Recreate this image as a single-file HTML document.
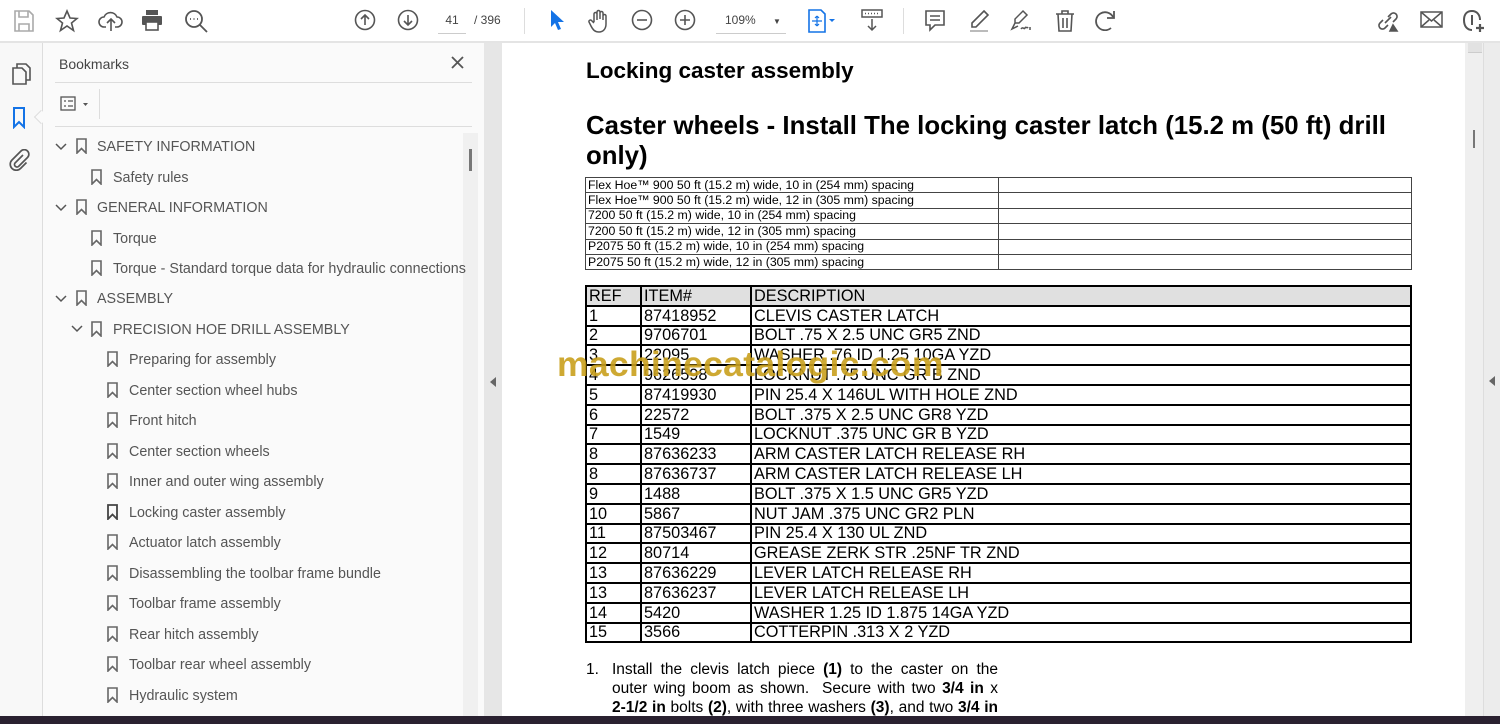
<!DOCTYPE html>
<html><head><meta charset="utf-8"><style>
*{margin:0;padding:0;box-sizing:border-box}
body{width:1500px;height:724px;overflow:hidden;position:relative;background:#fff;font-family:"Liberation Sans",Arial,sans-serif}
.abs{position:absolute}
#tb{left:0;top:0;width:1500px;height:43px;background:#fff;border-bottom:2px solid #e4e4e4}
.ic{position:absolute;top:9px}
#rail{left:0;top:43px;width:43px;height:673px;background:#f8f8f8;border-right:1px solid #ddd}
#panel{left:43px;top:43px;width:441px;height:673px;background:#fafafa}
#gstrip{left:484px;top:43px;width:18px;height:673px;background:#e6e6e6}
#page{left:502px;top:43px;width:963px;height:673px;background:#fff}
#rscroll{left:1465px;top:43px;width:18px;height:673px;background:#efefef}
#rpanel{left:1483px;top:43px;width:17px;height:673px;background:#ececec;border-left:1px solid #ddd}
#bottom{left:0;top:716px;width:1500px;height:8px;background:#2a2130}
.bm{position:absolute;color:#555;white-space:nowrap;font-family:"Liberation Sans",sans-serif;font-size:14.3px;margin-top:1px}
.bmi{position:absolute;width:11px;height:16px}
.chev{position:absolute;width:12px;height:8px}
table{border-collapse:collapse;position:absolute}
#t1{left:585px;top:177px;width:827px;font-size:12.3px}
#t1 td{border:1px solid #444;height:15.4px;line-height:13px;padding:0 2px;white-space:nowrap}
#t2{left:585px;top:285px;width:827px;font-size:16.3px}
#t2 td{border:2px solid #000;height:19.8px;line-height:16px;padding:0 2px;white-space:nowrap}
.para{position:absolute;left:110px;width:386px;font-size:15.5px;line-height:19px;color:#000;text-align:justify;text-align-last:justify;white-space:nowrap}
</style></head><body>
<div id="tb" class="abs">
<svg class="ic" style="left:13px" width="22" height="24" viewBox="0 0 22 24" fill="none" stroke="#aaa" stroke-width="1.6"><path d="M2 2h14l4 4v16H2z"/><path d="M6 2v6h9V2M6 22v-7h10v7"/></svg>
<svg class="ic" style="left:55px" width="24" height="24" viewBox="0 0 24 24" fill="none" stroke="#555" stroke-width="1.6"><path d="M12 2l3 7 7 .5-5.5 4.5 2 7.5L12 17l-6.5 4.5 2-7.5L2 9.5 9 9z"/></svg>
<svg class="ic" style="left:98px" width="26" height="24" viewBox="0 0 26 24" fill="none" stroke="#555" stroke-width="1.6"><path d="M8 18H6a5 5 0 010-10 7 7 0 0113 0 5 5 0 010 10h-2"/><path d="M13 22V11M9 14l4-4 4 4"/></svg>
<svg class="ic" style="left:141px" width="22" height="22" viewBox="0 0 22 22" fill="#555"><rect x="5" y="1" width="12" height="5"/><rect x="1" y="7" width="20" height="9" rx="1"/><rect x="5" y="13" width="12" height="8" fill="#fff" stroke="#555" stroke-width="1.6"/></svg>
<svg class="ic" style="left:184px" width="26" height="26" viewBox="0 0 26 26" fill="none" stroke="#555" stroke-width="1.8"><circle cx="10" cy="10" r="8"/><path d="M16 16l7 7"/><path d="M6 10h1M9.5 10h1M13 10h1"/></svg>
<svg class="ic" style="left:354px" width="22" height="22" viewBox="0 0 22 22" fill="none" stroke="#555" stroke-width="1.6"><circle cx="11" cy="11" r="9.5"/><path d="M11 16V6M7 10l4-4 4 4"/></svg>
<svg class="ic" style="left:397px" width="22" height="22" viewBox="0 0 22 22" fill="none" stroke="#555" stroke-width="1.6"><circle cx="11" cy="11" r="9.5"/><path d="M11 6v10M7 12l4 4 4-4"/></svg>
<div class="abs" style="left:438px;top:13px;width:28px;font-size:12px;color:#444;text-align:center;border-bottom:1px solid #ccc;padding-bottom:6px">41</div>
<div class="abs" style="left:474px;top:13px;font-size:12px;color:#444">/ 396</div>
<div class="abs" style="left:524px;top:8px;width:1px;height:26px;background:#ddd"></div>
<svg class="ic" style="left:549px" width="16" height="22" viewBox="0 0 16 22"><path d="M2 1v17l4-4 3 7 3-1-3-7h6z" fill="#1473e6"/></svg>
<svg class="ic" style="left:588px" width="22" height="24" viewBox="0 0 22 24" fill="none" stroke="#555" stroke-width="1.5"><path d="M6 13V5a1.5 1.5 0 013 0v6M9 10V3a1.5 1.5 0 013 0v7M12 10V4a1.5 1.5 0 013 0v7M15 11V7a1.5 1.5 0 013 0v8c0 5-3 8-7 8s-6-2-8-6l-2-4a1.5 1.5 0 012.5-1.5L6 14"/></svg>
<svg class="ic" style="left:631px" width="22" height="22" viewBox="0 0 22 22" fill="none" stroke="#555" stroke-width="1.6"><circle cx="11" cy="11" r="9.5"/><path d="M6 11h10"/></svg>
<svg class="ic" style="left:674px" width="22" height="22" viewBox="0 0 22 22" fill="none" stroke="#555" stroke-width="1.6"><circle cx="11" cy="11" r="9.5"/><path d="M6 11h10M11 6v10"/></svg>
<div class="abs" style="left:716px;top:13px;width:70px;font-size:12px;color:#444;border-bottom:1px solid #ccc;padding:0 0 6px 9px">109% <span style="margin-left:14px;font-size:8px">▼</span></div>
<svg class="ic" style="left:807px" width="30" height="24" viewBox="0 0 30 24"><path d="M2 1h12l4 4v18H2z" fill="#fff" stroke="#1473e6" stroke-width="1.6"/><path d="M10 7v10M5 12h10M10 7l-2 2M10 7l2 2M10 17l-2-2M10 17l2-2" stroke="#1473e6" stroke-width="1.2" fill="none"/><path d="M22 10l3 3 3-3z" fill="#1473e6"/></svg>
<svg class="ic" style="left:860px" width="24" height="24" viewBox="0 0 24 24" fill="none" stroke="#555" stroke-width="1.5"><rect x="2" y="1" width="20" height="7"/><path d="M5 4.5h1M8 4.5h1M11 4.5h1M14 4.5h1M17 4.5h1M12 10v11M8 17l4 4 4-4"/></svg>
<div class="abs" style="left:903px;top:8px;width:1px;height:26px;background:#ddd"></div>
<svg class="ic" style="left:924px" width="22" height="24" viewBox="0 0 22 24" fill="none" stroke="#555" stroke-width="1.6"><path d="M2 2h18v14H11l-5 5v-5H2z"/><path d="M6 7h10M6 11h10"/></svg>
<svg class="ic" style="left:967px" width="24" height="24" viewBox="0 0 24 24" fill="none" stroke="#555" stroke-width="1.6"><path d="M17 2l4 4L9 18H5v-4z"/><path d="M3 22h18" stroke="#bbb" stroke-width="2"/></svg>
<svg class="ic" style="left:1009px" width="26" height="24" viewBox="0 0 26 24" fill="none" stroke="#555" stroke-width="1.5"><path d="M14 2l4 4-8 8H6v-4zM6 14l-3 6 6-3"/><path d="M12 20c2-3 3 1 4-1s2 1 3-1M21 18v3" /></svg>
<svg class="ic" style="left:1055px" width="20" height="24" viewBox="0 0 20 24" fill="none" stroke="#555" stroke-width="1.6"><path d="M1 5h18M7 5V2h6v3M3 5l1 17h12l1-17M8 9v10M12 9v10"/></svg>
<svg class="ic" style="left:1095px" width="22" height="22" viewBox="0 0 22 22" fill="none" stroke="#555" stroke-width="1.8"><path d="M16 19A9 9 0 1118 8"/><path d="M19 2v7h-7"/></svg>
<svg class="ic" style="left:1375px" width="26" height="24" viewBox="0 0 26 24" fill="none" stroke="#555" stroke-width="1.6"><path d="M10 14l6-6M8 11l-3 3a3.5 3.5 0 005 5l3-3M18 13l3-3a3.5 3.5 0 00-5-5l-3 3"/><path d="M15 22l3-6 4 6z" fill="#555"/></svg>
<svg class="ic" style="left:1420px" width="24" height="22" viewBox="0 0 24 22" fill="none" stroke="#555" stroke-width="1.5"><rect x="1" y="3" width="21" height="15"/><path d="M1 3l10.5 9L22 3M1 18l8-7M22 18l-8-7"/></svg>
<svg class="ic" style="left:1462px" width="24" height="26" viewBox="0 0 24 26" fill="none" stroke="#555" stroke-width="2"><path d="M10 21c-5 0-8-4-8-10S5 2 10 2s8 4 8 9"/><path d="M10 6v10"/><path d="M18 15v8M14 19h8" stroke-width="2.2"/></svg>
</div>

<div id="rail" class="abs">
<svg class="abs" style="left:11px;top:19px" width="20" height="24" viewBox="0 0 20 24" fill="none" stroke="#555" stroke-width="1.6"><path d="M6 6V2h9l4 4v12h-4"/><path d="M2 6h9l4 4v12H2z"/></svg>
<svg class="abs" style="left:12px;top:64px" width="14" height="22" viewBox="0 0 14 22" fill="none" stroke="#1473e6" stroke-width="2"><path d="M2 1h10v19l-5-5-5 5z"/></svg>
<div class="abs" style="left:36px;top:69px;width:10px;height:10px;background:#fafafa;border-left:1px solid #ddd;border-bottom:1px solid #ddd;transform:rotate(45deg)"></div>
<svg class="abs" style="left:9px;top:106px" width="22" height="22" viewBox="0 0 22 22" fill="none" stroke="#555" stroke-width="1.7"><path d="M14 6l-8 8a2.5 2.5 0 003.5 3.5l9-9a4.5 4.5 0 00-6.5-6.5l-9 9a6 6 0 008.5 8.5l6-6"/></svg>
</div>

<div id="panel" class="abs">
<div class="abs" style="left:16px;top:13px;font-size:14px;color:#444">Bookmarks</div>
<svg class="abs" style="left:408px;top:13px" width="13" height="13" viewBox="0 0 13 13" stroke="#555" stroke-width="1.8"><path d="M1 1l11 11M12 1L1 12"/></svg>
<div class="abs" style="left:12px;top:39px;width:417px;height:1px;background:#ddd"></div>
<svg class="abs" style="left:17px;top:53px" width="34" height="16" viewBox="0 0 34 16" fill="none" stroke="#555" stroke-width="1.3"><rect x="1" y="1" width="14" height="13"/><path d="M4 5h2M8 5h5M4 10h2M8 10h5"/><path d="M23 7h5l-2.5 3z" fill="#555" stroke="none"/></svg>
<div class="abs" style="left:56px;top:46px;width:1px;height:30px;background:#ddd"></div>
<div class="abs" style="left:12px;top:83px;width:417px;height:1px;background:#ddd"></div>
<div class="abs" style="left:420px;top:90px;width:15px;height:583px;background:#f0f0f0"></div>
<div class="abs" style="left:426px;top:106px;width:3px;height:22px;background:#777"></div>
</div>
<div id="gstrip" class="abs"><div class="abs" style="left:6px;top:334px;width:0;height:0;border-top:5px solid transparent;border-bottom:5px solid transparent;border-right:6px solid #666"></div></div>

<div id="page" class="abs">
<div class="abs" style="left:84px;top:15px;font-size:22.5px;font-weight:bold;color:#000">Locking caster assembly</div>
<div class="abs" style="left:84px;top:68px;width:840px;font-size:25.8px;font-weight:bold;line-height:30px;color:#000">Caster wheels - Install The locking caster latch (15.2 m (50 ft) drill only)</div>
<div class="abs" style="left:84px;top:617px;font-size:15.5px;line-height:19px">1.</div>
<div class="para" style="top:617px">Install the clevis latch piece <b>(1)</b> to the caster on the</div>
<div class="para" style="top:636px">outer wing boom as shown.&nbsp; Secure with two <b>3/4 in</b> x</div>
<div class="para" style="top:655px"><b>2-1/2 in</b> bolts <b>(2)</b>, with three washers <b>(3)</b>, and two <b>3/4 in</b></div>
</div>

<table id="t1">
<tr><td style="width:413px">Flex Hoe™ 900 50 ft (15.2 m) wide, 10 in (254 mm) spacing</td><td></td></tr>
<tr><td>Flex Hoe™ 900 50 ft (15.2 m) wide, 12 in (305 mm) spacing</td><td></td></tr>
<tr><td>7200 50 ft (15.2 m) wide, 10 in (254 mm) spacing</td><td></td></tr>
<tr><td>7200 50 ft (15.2 m) wide, 12 in (305 mm) spacing</td><td></td></tr>
<tr><td>P2075 50 ft (15.2 m) wide, 10 in (254 mm) spacing</td><td></td></tr>
<tr><td>P2075 50 ft (15.2 m) wide, 12 in (305 mm) spacing</td><td></td></tr>
</table>

<table id="t2">
<tr style="background:#e0e0e0"><td style="width:55px">REF</td><td style="width:110px">ITEM#</td><td>DESCRIPTION</td></tr>
<tr><td>1</td><td>87418952</td><td>CLEVIS CASTER LATCH</td></tr>
<tr><td>2</td><td>9706701</td><td>BOLT .75 X 2.5 UNC GR5 ZND</td></tr>
<tr><td>3</td><td>22095</td><td>WASHER .76 ID 1.25 10GA YZD</td></tr>
<tr><td>4</td><td>9626598</td><td>LOCKNUT .75 UNC GR B ZND</td></tr>
<tr><td>5</td><td>87419930</td><td>PIN 25.4 X 146UL WITH HOLE ZND</td></tr>
<tr><td>6</td><td>22572</td><td>BOLT .375 X 2.5 UNC GR8 YZD</td></tr>
<tr><td>7</td><td>1549</td><td>LOCKNUT .375 UNC GR B YZD</td></tr>
<tr><td>8</td><td>87636233</td><td>ARM CASTER LATCH RELEASE RH</td></tr>
<tr><td>8</td><td>87636737</td><td>ARM CASTER LATCH RELEASE LH</td></tr>
<tr><td>9</td><td>1488</td><td>BOLT .375 X 1.5 UNC GR5 YZD</td></tr>
<tr><td>10</td><td>5867</td><td>NUT JAM .375 UNC GR2 PLN</td></tr>
<tr><td>11</td><td>87503467</td><td>PIN 25.4 X 130 UL ZND</td></tr>
<tr><td>12</td><td>80714</td><td>GREASE ZERK STR .25NF TR ZND</td></tr>
<tr><td>13</td><td>87636229</td><td>LEVER LATCH RELEASE RH</td></tr>
<tr><td>13</td><td>87636237</td><td>LEVER LATCH RELEASE LH</td></tr>
<tr><td>14</td><td>5420</td><td>WASHER 1.25 ID 1.875 14GA YZD</td></tr>
<tr><td>15</td><td>3566</td><td>COTTERPIN .313 X 2 YZD</td></tr>
</table>

<div class="abs" style="left:557px;top:344px;font-size:35.5px;font-weight:bold;color:#c9a01e;opacity:.9;letter-spacing:0.3px">machinecatalogic.com</div>

<div id="rscroll" class="abs"><div class="abs" style="left:3px;top:0;width:14px;height:10px;background:#e2e2e2;border-bottom:1px solid #ccc"></div><div class="abs" style="left:8px;top:87px;width:2px;height:18px;background:#777"></div></div>
<div id="rpanel" class="abs"><div class="abs" style="left:5px;top:333px;width:0;height:0;border-top:5px solid transparent;border-bottom:5px solid transparent;border-right:6px solid #666"></div></div>
<div id="bottom" class="abs"></div>

<svg class="chev" style="left:55px;top:143px" viewBox="0 0 12 8" fill="none" stroke="#555" stroke-width="1.5"><path d="M1 1l5 5 5-5"/></svg>
<svg class="bmi" style="left:76px;top:138px" viewBox="0 0 11 16" fill="none" stroke="#666" stroke-width="1.6"><path d="M1 1h9v14l-4.5-4.5L1 15z"/></svg>
<div class="bm" style="left:97px;top:138px">SAFETY INFORMATION</div>
<svg class="bmi" style="left:91px;top:169px" viewBox="0 0 11 16" fill="none" stroke="#666" stroke-width="1.6"><path d="M1 1h9v14l-4.5-4.5L1 15z"/></svg>
<div class="bm" style="left:113px;top:169px">Safety rules</div>
<svg class="chev" style="left:55px;top:204px" viewBox="0 0 12 8" fill="none" stroke="#555" stroke-width="1.5"><path d="M1 1l5 5 5-5"/></svg>
<svg class="bmi" style="left:76px;top:199px" viewBox="0 0 11 16" fill="none" stroke="#666" stroke-width="1.6"><path d="M1 1h9v14l-4.5-4.5L1 15z"/></svg>
<div class="bm" style="left:97px;top:199px">GENERAL INFORMATION</div>
<svg class="bmi" style="left:91px;top:230px" viewBox="0 0 11 16" fill="none" stroke="#666" stroke-width="1.6"><path d="M1 1h9v14l-4.5-4.5L1 15z"/></svg>
<div class="bm" style="left:113px;top:230px">Torque</div>
<svg class="bmi" style="left:91px;top:260px" viewBox="0 0 11 16" fill="none" stroke="#666" stroke-width="1.6"><path d="M1 1h9v14l-4.5-4.5L1 15z"/></svg>
<div class="bm" style="left:113px;top:260px">Torque - Standard torque data for hydraulic connections</div>
<svg class="chev" style="left:55px;top:295px" viewBox="0 0 12 8" fill="none" stroke="#555" stroke-width="1.5"><path d="M1 1l5 5 5-5"/></svg>
<svg class="bmi" style="left:76px;top:290px" viewBox="0 0 11 16" fill="none" stroke="#666" stroke-width="1.6"><path d="M1 1h9v14l-4.5-4.5L1 15z"/></svg>
<div class="bm" style="left:97px;top:290px">ASSEMBLY</div>
<svg class="chev" style="left:71px;top:325px" viewBox="0 0 12 8" fill="none" stroke="#555" stroke-width="1.5"><path d="M1 1l5 5 5-5"/></svg>
<svg class="bmi" style="left:91px;top:321px" viewBox="0 0 11 16" fill="none" stroke="#666" stroke-width="1.6"><path d="M1 1h9v14l-4.5-4.5L1 15z"/></svg>
<div class="bm" style="left:113px;top:321px">PRECISION HOE DRILL ASSEMBLY</div>

<svg class="bmi" style="left:107px;top:351px" viewBox="0 0 11 16" fill="none" stroke="#666" stroke-width="1.6"><path d="M1 1h9v14l-4.5-4.5L1 15z"/></svg><div class="bm" style="left:129px;top:351px">Preparing for assembly</div>
<svg class="bmi" style="left:107px;top:382px" viewBox="0 0 11 16" fill="none" stroke="#666" stroke-width="1.6"><path d="M1 1h9v14l-4.5-4.5L1 15z"/></svg><div class="bm" style="left:129px;top:382px">Center section wheel hubs</div>
<svg class="bmi" style="left:107px;top:412px" viewBox="0 0 11 16" fill="none" stroke="#666" stroke-width="1.6"><path d="M1 1h9v14l-4.5-4.5L1 15z"/></svg><div class="bm" style="left:129px;top:412px">Front hitch</div>
<svg class="bmi" style="left:107px;top:443px" viewBox="0 0 11 16" fill="none" stroke="#666" stroke-width="1.6"><path d="M1 1h9v14l-4.5-4.5L1 15z"/></svg><div class="bm" style="left:129px;top:443px">Center section wheels</div>
<svg class="bmi" style="left:107px;top:473px" viewBox="0 0 11 16" fill="none" stroke="#666" stroke-width="1.6"><path d="M1 1h9v14l-4.5-4.5L1 15z"/></svg><div class="bm" style="left:129px;top:473px">Inner and outer wing assembly</div>
<svg class="bmi" style="left:107px;top:504px" viewBox="0 0 11 16" fill="none" stroke="#444" stroke-width="1.8"><path d="M1 1h9v14l-4.5-4.5L1 15z"/></svg><div class="bm" style="left:129px;top:504px">Locking caster assembly</div>
<svg class="bmi" style="left:107px;top:534px" viewBox="0 0 11 16" fill="none" stroke="#666" stroke-width="1.6"><path d="M1 1h9v14l-4.5-4.5L1 15z"/></svg><div class="bm" style="left:129px;top:534px">Actuator latch assembly</div>
<svg class="bmi" style="left:107px;top:565px" viewBox="0 0 11 16" fill="none" stroke="#666" stroke-width="1.6"><path d="M1 1h9v14l-4.5-4.5L1 15z"/></svg><div class="bm" style="left:129px;top:565px">Disassembling the toolbar frame bundle</div>
<svg class="bmi" style="left:107px;top:595px" viewBox="0 0 11 16" fill="none" stroke="#666" stroke-width="1.6"><path d="M1 1h9v14l-4.5-4.5L1 15z"/></svg><div class="bm" style="left:129px;top:595px">Toolbar frame assembly</div>
<svg class="bmi" style="left:107px;top:626px" viewBox="0 0 11 16" fill="none" stroke="#666" stroke-width="1.6"><path d="M1 1h9v14l-4.5-4.5L1 15z"/></svg><div class="bm" style="left:129px;top:626px">Rear hitch assembly</div>
<svg class="bmi" style="left:107px;top:656px" viewBox="0 0 11 16" fill="none" stroke="#666" stroke-width="1.6"><path d="M1 1h9v14l-4.5-4.5L1 15z"/></svg><div class="bm" style="left:129px;top:656px">Toolbar rear wheel assembly</div>
<svg class="bmi" style="left:107px;top:687px" viewBox="0 0 11 16" fill="none" stroke="#666" stroke-width="1.6"><path d="M1 1h9v14l-4.5-4.5L1 15z"/></svg><div class="bm" style="left:129px;top:687px">Hydraulic system</div>
</body></html>
